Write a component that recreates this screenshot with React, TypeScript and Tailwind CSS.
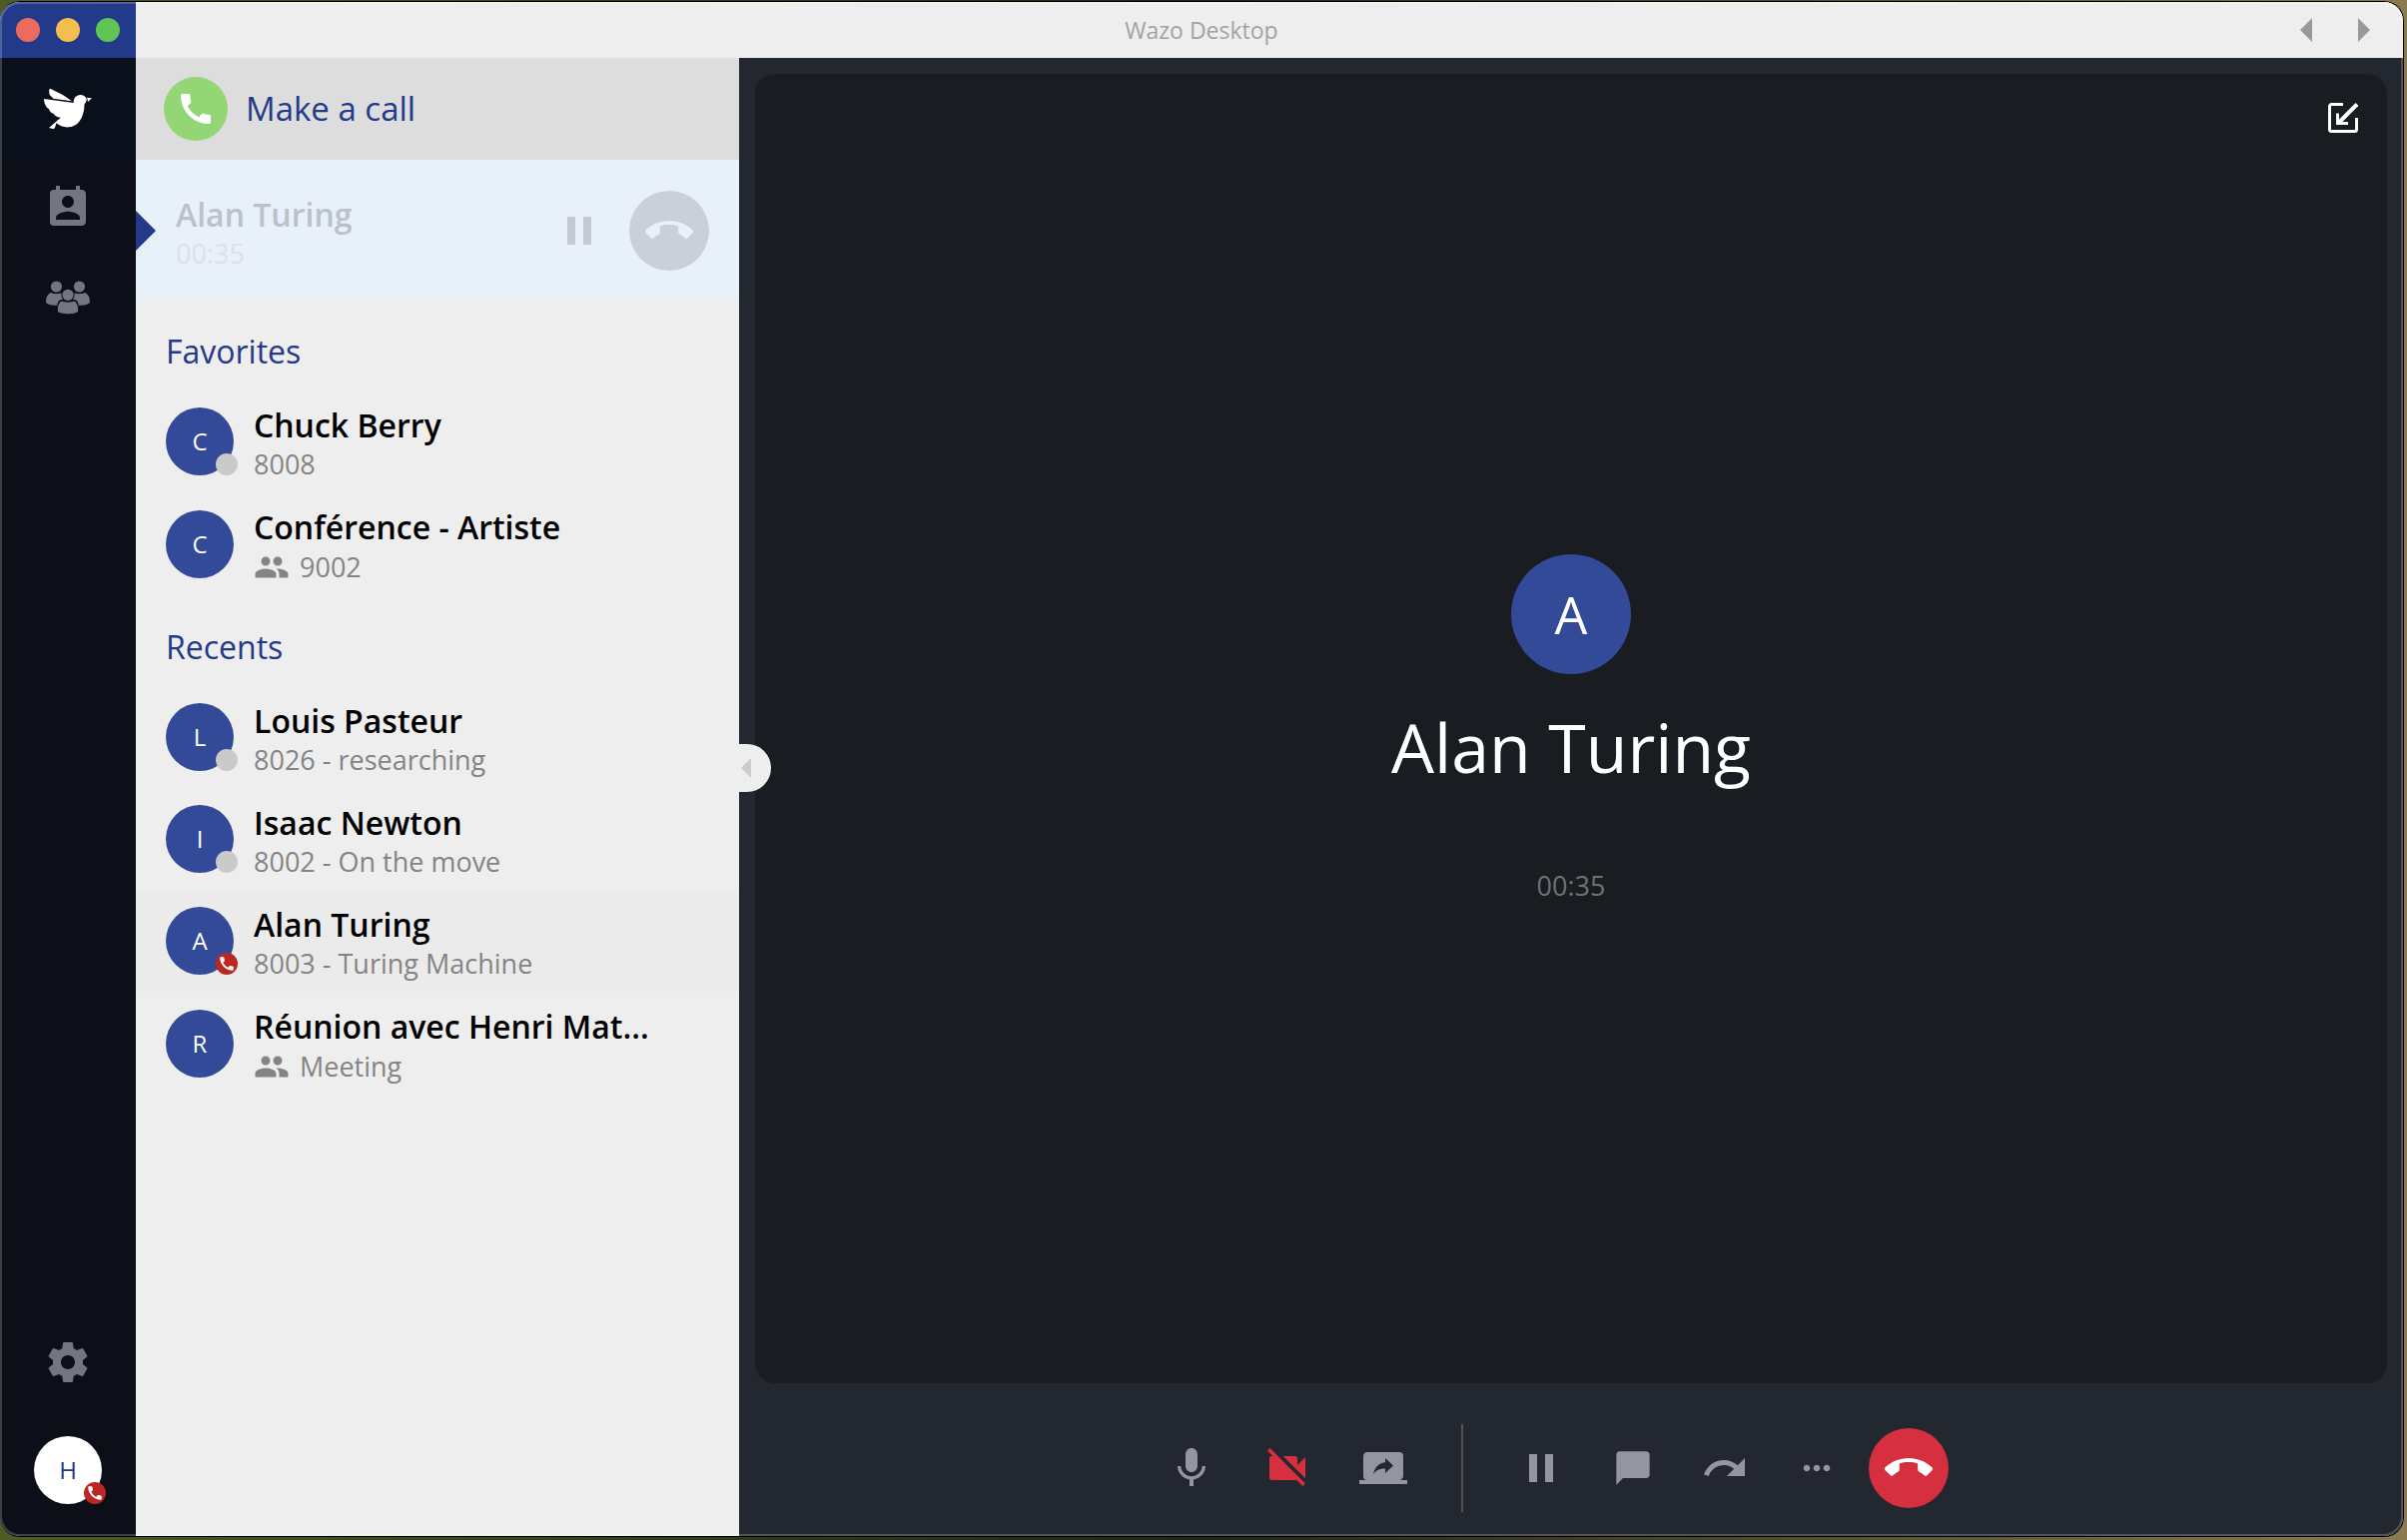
import React from 'react';
import {
  MdCall,
  MdCallEnd,
  MdChatBubble,
  MdMic,
  MdMoreHoriz,
  MdPause,
  MdPeople,
  MdPermContactCalendar,
  MdRedo,
  MdScreenShare,
} from 'react-icons/md';

type Status = 'offline' | 'oncall';

type Contact = {
  name: string;
  detail: string;
  status?: Status;
  group?: boolean;
  active?: boolean;
};

const favorites: Contact[] = [
  { name: 'Chuck Berry', detail: '8008', status: 'offline' },
  { name: 'Conférence - Artiste', detail: '9002', group: true },
];

const recents: Contact[] = [
  { name: 'Louis Pasteur', detail: '8026 - researching', status: 'offline' },
  { name: 'Isaac Newton', detail: '8002 - On the move', status: 'offline' },
  { name: 'Alan Turing', detail: '8003 - Turing Machine', status: 'oncall', active: true },
  { name: 'Réunion avec Henri Mat...', detail: 'Meeting', group: true },
];

const BirdLogo = () => (
  <svg width="50" height="42" viewBox="129 264 150 126" fill="#fff" aria-hidden="true">
    <path d="M149 267 C150 266 152 267 154 268 L181 281 C191 286 207 297 216 304 L160 296 C158 291 151 289 149 284 C147 278 147 271 149 267Z" />
    <path d="M132 297 L221 309 C220 296 229 285 241 285 C250 285 257 289 260 297 C262 303 256 309 253 315 C254 324 252 334 248 346 C243 364 228 381 206 382 C192 383 179 378 170 370 C167 375 167 382 163 386 C158 388 152 385 147 384 L171 363 C174 360 179 357 182 353 C172 352 164 348 161 341 C155 340 148 335 147 327 C139 324 133 313 132 297Z" />
    <path d="M260 293 L276 295 L264 306 C264 301 263 297 260 293Z" />
  </svg>
);

const GroupIcon = () => (
  <svg width="44" height="34" viewBox="0 0 44 34" fill="currentColor" aria-hidden="true">
    <circle cx="10.5" cy="6" r="5.6" />
    <circle cx="33.5" cy="6" r="5.6" />
    <path d="M5 12 C8 13.5 13 13.5 15.5 12.3 C15 15 16 17 17 19 C13 19 11.5 21 11.5 24.5 C7 25.5 2 24 0 22 C0 17 1 14 5 12Z" />
    <path d="M39 12 C36 13.5 31 13.5 28.5 12.3 C29 15 28 17 27 19 C31 19 32.5 21 32.5 24.5 C37 25.5 42 24 44 22 C44 17 43 14 39 12Z" />
    <circle cx="22" cy="14.3" r="5.6" />
    <path d="M16 20.5 C19 22 25 22 28 20.5 C31 21.5 32.5 25 32 31 C29 34 15 34 12 31 C11.500 25 13 21.5 16 20.5Z" />
  </svg>
);

const GearIcon = () => (
  <svg width="48" height="48" viewBox="0 0 24 24" fill="currentColor" aria-hidden="true">
    <path d="M19.43 12.98c.04-.32.07-.64.07-.98s-.03-.66-.07-.98l2.11-1.65c.19-.15.24-.42.12-.64l-2-3.46c-.12-.22-.39-.3-.61-.22l-2.49 1c-.52-.4-1.08-.73-1.69-.98l-.38-2.65C14.46 2.18 14.25 2 14 2h-4c-.25 0-.46.18-.49.42l-.38 2.65c-.61.25-1.17.59-1.69.98l-2.49-1c-.23-.09-.49 0-.61.22l-2 3.46c-.13.22-.07.49.12.64l2.11 1.65c-.04.32-.07.65-.07.98s.03.66.07.98l-2.11 1.65c-.19.15-.24.42-.12.64l2 3.46c.12.22.39.3.61.22l2.49-1c.52.4 1.08.73 1.69.98l.38 2.65c.03.24.24.42.49.42h4c.25 0 .46-.18.49-.42l.38-2.65c.61-.25 1.17-.59 1.69-.98l2.49 1c.23.09.49 0 .61-.22l2-3.46c.12-.22.07-.49-.12-.64l-2.11-1.65zM12 15.5c-1.93 0-3.5-1.57-3.5-3.5s1.57-3.5 3.5-3.5 3.5 1.57 3.5 3.5-1.57 3.5-3.5 3.5z" />
  </svg>
);

const VideoOffIcon = () => (
  <svg width="48" height="48" viewBox="0 0 24 24" fill="currentColor" aria-hidden="true">
    <path d="M21 6.5l-4 4V7c0-.55-.45-1-1-1H9.82L21 17.18V6.5zM3.27 2L2 3.27 4.73 6H4c-.55 0-1 .45-1 1v10c0 .55.45 1 1 1h12c.21 0 .39-.08.54-.18L19.73 21 21 19.73 3.27 2z" />
  </svg>
);

const ShrinkIcon = () => (
  <svg width="30" height="30" viewBox="0 0 30 30" fill="none" stroke="#fff" strokeWidth="3" aria-hidden="true">
    <path d="M15 1.5H3.500a2 2 0 0 0-2 2V26.500a2 2 0 0 0 2 2H26.500a2 2 0 0 0 2-2V15" />
    <path d="M9.5 10.500V20.500H20" />
    <path d="M29 1.500L10.500 20" strokeWidth="4" />
  </svg>
);

type TriangleProps = { className: string; points: string; width: number; height: number };

const Triangle = ({ className, points, width, height }: TriangleProps) => (
  <svg className={className} width={width} height={height} viewBox={`0 0 ${width} ${height}`} fill="currentColor" aria-hidden="true">
    <polygon points={points} />
  </svg>
);

const StatusBadge = ({ status }: { status: Status }) =>
  status === 'oncall' ? (
    <span className="absolute -right-1 bottom-0 flex size-[22px] items-center justify-center rounded-full bg-[#bb2722] text-white">
      <MdCall size={18} />
    </span>
  ) : (
    <span className="absolute -right-1 bottom-0 size-[22px] rounded-full bg-[#cacaca]" />
  );

const ContactRow = ({ contact }: { contact: Contact }) => (
  <li className={contact.active ? 'bg-[#ebebeb]' : ''}>
    <button type="button" className="flex w-full items-center gap-5 px-[30px] py-3 text-left">
      <span className="relative flex size-[68px] shrink-0 items-center justify-center rounded-full bg-[#334a99] text-2xl text-white">
        {contact.name[0]}
        {contact.status && <StatusBadge status={contact.status} />}
      </span>
      <span className="flex min-w-0 flex-col">
        <span className="truncate text-[32px] leading-[46px] font-semibold text-black">{contact.name}</span>
        {contact.group ? (
          <span className="flex h-[34px] items-center gap-2.5 text-[27px] leading-8 text-[#848484]">
            <MdPeople size={36} />
            {contact.detail}
          </span>
        ) : (
          <span className="text-[27px] leading-8 text-[#848484]">{contact.detail}</span>
        )}
      </span>
    </button>
  </li>
);

const ContactSection = ({ title, contacts }: { title: string; contacts: Contact[] }) => (
  <section>
    <h2 className="px-[30px] pt-7 pb-4 text-[32px] leading-[46px] text-[#233989]">{title}</h2>
    <ul>
      {contacts.map((contact) => (
        <ContactRow key={contact.name} contact={contact} />
      ))}
    </ul>
  </section>
);

const TitleBar = () => (
  <header className="flex h-14 shrink-0 items-center bg-[#eee]">
    <div className="flex w-[136px] items-center gap-4 self-stretch bg-[#233989] pl-4">
      <button type="button" aria-label="Close" className="size-6 rounded-full bg-[#ed6a5e]" />
      <button type="button" aria-label="Minimize" className="size-6 rounded-full bg-[#f4be4f]" />
      <button type="button" aria-label="Zoom" className="size-6 rounded-full bg-[#61c555]" />
    </div>
    <h1 className="flex-1 text-center text-[23px] leading-8 text-[#a3a3a3]">Wazo Desktop</h1>
    <div className="flex w-[136px] items-center justify-end gap-[46px] pr-[33px] text-[#999]">
      <button type="button" aria-label="Back">
        <Triangle className="block" points="12,0 12,24 0,12" width={12} height={24} />
      </button>
      <button type="button" aria-label="Forward">
        <Triangle className="block" points="0,0 12,12 0,24" width={12} height={24} />
      </button>
    </div>
  </header>
);

const NavBar = () => (
  <nav className="flex w-[136px] shrink-0 flex-col items-center bg-[#0c0f17] pb-8 text-[#727680]">
    <a href="#home" aria-label="Home" className="flex h-[102px] w-full items-center justify-center bg-[#09101c]">
      <BirdLogo />
    </a>
    <a href="#contacts" aria-label="Contacts" className="flex h-[92px] w-full items-center justify-center pt-1">
      <MdPermContactCalendar size={48} />
    </a>
    <a href="#rooms" aria-label="Rooms" className="flex h-[92px] w-full items-center justify-center">
      <GroupIcon />
    </a>
    <a href="#settings" aria-label="Settings" className="mt-auto mb-[50px]">
      <GearIcon />
    </a>
    <button type="button" className="relative flex size-[68px] items-center justify-center rounded-full bg-white text-2xl text-[#233989]">
      H
      <StatusBadge status="oncall" />
    </button>
  </nav>
);

const CurrentCall = () => (
  <div className="relative flex h-[141px] items-center bg-[#e8f0fa] pr-[30px] pl-10">
    <Triangle className="absolute left-0 text-[#233989]" points="0,0 20,20 0,40" width={20} height={40} />
    <div className="flex-1">
      <p className="text-[32px] leading-[46px] font-semibold text-[#bac1c9]">Alan Turing</p>
      <p className="text-[27px] leading-8 text-[#dae1ea]">00:35</p>
    </div>
    <button type="button" aria-label="Hold" className="mr-[26px] text-[#c3cad3]">
      <MdPause size={48} />
    </button>
    <button type="button" aria-label="Hang up" className="flex size-20 items-center justify-center rounded-full bg-[#c9d0d8] text-[#e8f0fa]">
      <MdCallEnd size={48} />
    </button>
  </div>
);

const ContactsPanel = () => (
  <aside className="relative w-[604px] shrink-0 bg-[#eee]">
    <button type="button" className="flex h-[102px] w-full items-center gap-[18px] bg-[#ddd] pl-7 text-[33px] text-[#233989]">
      <span className="flex size-16 items-center justify-center rounded-full bg-[#94d675] text-white">
        <MdCall size={40} />
      </span>
      Make a call
    </button>
    <CurrentCall />
    <ContactSection title="Favorites" contacts={favorites} />
    <ContactSection title="Recents" contacts={recents} />
    <button
      type="button"
      aria-label="Collapse panel"
      className="absolute top-[687px] left-full z-10 flex h-12 w-8 items-center rounded-r-full bg-[#eee] pl-0.5 text-[#ccc]"
    >
      <Triangle className="block" points="10,0 10,20 0,10" width={10} height={20} />
    </button>
  </aside>
);

const CallControls = () => (
  <div className="flex h-[153px] shrink-0 items-center justify-center pt-4 text-[#93969f]">
    <button type="button" aria-label="Mute" className="flex w-24 justify-center">
      <MdMic size={48} />
    </button>
    <button type="button" aria-label="Turn camera on" className="flex w-24 justify-center text-[#d62f40]">
      <VideoOffIcon />
    </button>
    <button type="button" aria-label="Share screen" className="flex w-24 justify-center">
      <MdScreenShare size={48} />
    </button>
    <span className="mr-8 ml-[30px] h-[88px] w-0.5 bg-[#50545a]" />
    <button type="button" aria-label="Hold" className="flex w-[92px] justify-center">
      <MdPause size={48} />
    </button>
    <button type="button" aria-label="Chat" className="flex w-[92px] justify-center">
      <MdChatBubble size={40} />
    </button>
    <button type="button" aria-label="Transfer" className="flex w-[92px] justify-center">
      <MdRedo size={48} />
    </button>
    <button type="button" aria-label="More" className="flex w-[92px] justify-center">
      <MdMoreHoriz size={40} />
    </button>
    <button type="button" aria-label="Hang up" className="mr-[50px] ml-1.5 flex size-20 items-center justify-center rounded-full bg-[#d62f40] text-white">
      <MdCallEnd size={48} />
    </button>
  </div>
);

const CallView = () => (
  <main className="flex min-w-0 flex-1 flex-col bg-[#23272f] px-4 pt-4">
    <section className="relative flex flex-1 flex-col items-center justify-center rounded-[20px] bg-[#191c20]">
      <button type="button" aria-label="Shrink" className="absolute top-[29px] right-[29px]">
        <ShrinkIcon />
      </button>
      <span className="flex size-[120px] items-center justify-center rounded-full bg-[#334a99] text-[52px] text-white">A</span>
      <p className="mt-6 text-[68px] leading-[98px] text-white">Alan Turing</p>
      <p className="mt-[72px] text-[27px] leading-9 text-[#6f7275]">00:35</p>
    </section>
    <CallControls />
  </main>
);

export default function App() {
  return (
    <div className="flex h-screen bg-linear-to-r from-[#4d5c22] via-[#20270f] to-[#8a7a50] pt-px pr-[3px] pb-[3px] font-['Open_Sans',sans-serif]">
      <div className="relative flex min-w-0 flex-1 flex-col overflow-hidden rounded-[20px] border-y border-r border-black bg-[#eee]">
        <TitleBar />
        <div className="flex min-h-0 flex-1">
          <NavBar />
          <ContactsPanel />
          <CallView />
        </div>
        <div className="pointer-events-none absolute inset-0 rounded-[20px] border-2 border-white/20" />
      </div>
    </div>
  );
}
